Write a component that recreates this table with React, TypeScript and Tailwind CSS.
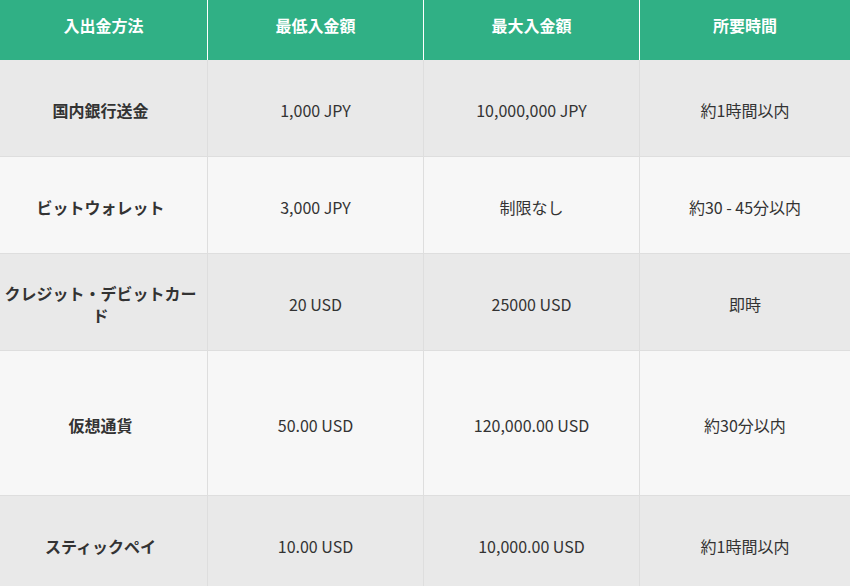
import React from "react";

const headers = ["入出金方法", "最低入金額", "最大入金額", "所要時間"];

const rows = [
  { method: "国内銀行送金", min: "1,000 JPY", max: "10,000,000 JPY", time: "約1時間以内", h: "h-[97px]" },
  { method: "ビットウォレット", min: "3,000 JPY", max: "制限なし", time: "約30 - 45分以内", h: "h-[97px]" },
  { method: "クレジット・デビットカード", min: "20 USD", max: "25000 USD", time: "即時", h: "h-[97px]" },
  { method: "仮想通貨", min: "50.00 USD", max: "120,000.00 USD", time: "約30分以内", h: "h-[145px]" },
  { method: "スティックペイ", min: "10.00 USD", max: "10,000.00 USD", time: "約1時間以内", h: "h-[97px]" },
];

const cols = "grid grid-cols-[207px_216px_216px_211px]";

export default function App() {
  return (
    <div
      className="w-[850px] h-[586px] overflow-hidden bg-white text-[16px] text-[#333]"
      style={{ fontFamily: '"Noto Sans CJK JP", "Noto Sans", sans-serif' }}
    >
      {/* Header */}
      <div className={`${cols} h-[60px] bg-[#30b085] text-white font-bold`}>
        {headers.map((h, i) => (
          <div
            key={h}
            className={`flex items-center justify-center pb-[10px] ${i > 0 ? "border-l border-white" : ""}`}
          >
            {h}
          </div>
        ))}
      </div>

      {/* Body */}
      {rows.map((r, i) => (
        <div
          key={r.method}
          className={`${cols} ${r.h} border-b border-[#dedede] ${i % 2 === 0 ? "bg-[#e9e9e9]" : "bg-[#f7f7f7]"}`}
        >
          <div className="flex items-center justify-center pl-0.5 pr-2 pt-1.5 text-center font-bold leading-[1.35]">
            {r.method}
          </div>
          <div className="flex items-center justify-center pt-1 border-l border-[#dedede]">{r.min}</div>
          <div className="flex items-center justify-center pt-1 border-l border-[#dedede]">{r.max}</div>
          <div className="flex items-center justify-center pt-1 border-l border-[#dedede]">{r.time}</div>
        </div>
      ))}
    </div>
  );
}
